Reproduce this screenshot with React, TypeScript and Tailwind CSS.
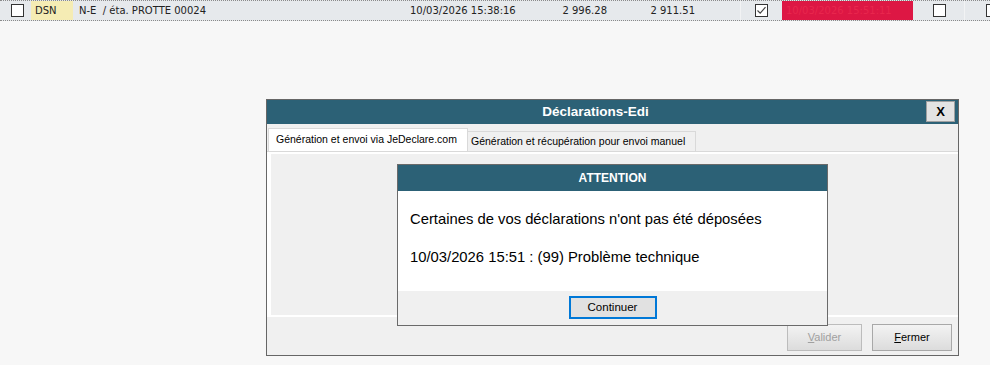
import React from "react";

const Box = ({ checked }: { checked?: boolean }) => (
  <div className="w-[13px] h-[13px] shrink-0 border border-[#333] bg-white flex items-center justify-center">
    {checked && (
      <svg width="11" height="11" viewBox="0 0 11 11">
        <path d="M1.5 5.5 L4.2 8.2 L9.5 2.2" fill="none" stroke="#444" strokeWidth="1.2" />
      </svg>
    )}
  </div>
);

export default function App() {
  return (
    <div className="w-[990px] h-[365px] relative overflow-hidden bg-[#f7f7f7]" style={{ fontFamily: "'DejaVu Sans', sans-serif" }}>
      {/* grid row */}
      <div className="w-[990px] h-[21px] flex border-y border-dotted border-[#8a8a8a] bg-[#e6e9ec] text-[10px] text-[#222]">
        <div className="w-[31px] shrink-0 flex items-center pl-[11px]"><Box /></div>
        <div className="w-[42px] shrink-0 bg-[#f5ecb4] flex items-center pl-[4px]">DSN</div>
        <div className="w-[327px] shrink-0 flex items-center pl-[6px] whitespace-pre">N-E  / éta. PROTTE 00024</div>
        <div className="w-[130px] shrink-0 flex items-center pl-[10px]">10/03/2026 15:38:16</div>
        <div className="w-[77px] shrink-0 flex items-center justify-end">2 996.28</div>
        <div className="w-[88px] shrink-0 flex items-center justify-end">2 911.51</div>
        <div className="w-[46px] shrink-0 border-r border-[#f2f3f4]"></div>
        <div className="w-[41px] shrink-0 flex items-center justify-start pl-[14px]"><Box checked /></div>
        <div className="w-[131px] shrink-0 bg-[#dd1744] flex items-center pl-[4px] text-[#e8264d]">10/03/2026 15:51:11</div>
        <div className="w-[52px] shrink-0 flex items-center pl-[20px] border-r border-[#f2f3f4]"><Box /></div>
        <div className="flex-1 flex items-center pl-[21px]"><Box /></div>
      </div>

      {/* main dialog */}
      <div className="absolute left-[266px] top-[99px] w-[693px] h-[257px] border border-[#666] bg-[#f0f0f0] flex flex-col" style={{ fontFamily: "'Liberation Sans', Arial, sans-serif" }}>
        <div className="h-[24px] bg-[#2c6176] flex items-center relative">
          <div className="flex-1 text-center text-white font-bold text-[13.5px] pr-[34px]">Déclarations-Edi</div>
          <div className="absolute right-[3px] top-[1px] w-[29px] h-[21px] bg-[#e3e3e3] border border-[#a0a0a0] flex items-center justify-center font-bold text-[13px] text-black">X</div>
        </div>
        <div className="h-[4px]"></div>
        <div className="flex items-end h-[23px] pl-[1px]">
          <div className="w-[200px] h-[23px] bg-white border border-b-0 border-[#d9d9d9] flex items-center pl-[7px] text-[10.5px] text-black">Génération et envoi via JeDeclare.com</div>
          <div className="w-[228px] h-[20px] bg-[#f0f0f0] border border-[#d9d9d9] border-l-0 border-b-0 flex items-center pl-[3px] text-[10.5px] text-black">Génération et récupération pour envoi manuel</div>
        </div>
        <div className="h-[166px] bg-white pl-[4px] pt-[2px] pb-[2px] flex border-t border-[#d9d9d9]">
          <div className="flex-1 bg-[#f0f0f0]"></div>
        </div>
        <div className="flex-1 flex justify-end items-start pt-[7px] pr-[6px] gap-[10px]">
          <div className="w-[75px] h-[27px] border border-[#bcbcbc] bg-gradient-to-b from-[#f3f3f3] to-[#dcdcdc] flex items-center justify-center text-[11px] text-[#a0a0a0]"><span><span className="underline">V</span>alider</span></div>
          <div className="w-[80px] h-[27px] border border-[#a8a8a8] bg-gradient-to-b from-[#f3f3f3] to-[#dcdcdc] flex items-center justify-center text-[11px] text-black"><span><span className="underline">F</span>ermer</span></div>
        </div>
      </div>

      {/* alert */}
      <div className="absolute left-[397px] top-[164px] w-[431px] h-[162px] border border-[#6a6a6a] bg-white flex flex-col" style={{ fontFamily: "'Liberation Sans', Arial, sans-serif" }}>
        <div className="h-[26px] bg-[#2c6176] flex items-center justify-center text-white font-bold text-[12px]">ATTENTION</div>
        <div className="h-[100px] bg-white px-[12px] pt-[19px] text-[14.8px] leading-[18px] text-black flex flex-col gap-[20px]">
          <div>Certaines de vos déclarations n'ont pas été déposées</div>
          <div>10/03/2026 15:51 : (99) Problème technique</div>
        </div>
        <div className="flex-1 bg-[#f0f0f0] flex justify-center pt-[5px]">
          <div className="w-[88px] h-[23px] border-2 border-[#0078d7] bg-[#e1e1e1] flex items-center justify-center text-[11.5px] text-black">Continuer</div>
        </div>
      </div>
    </div>
  );
}
